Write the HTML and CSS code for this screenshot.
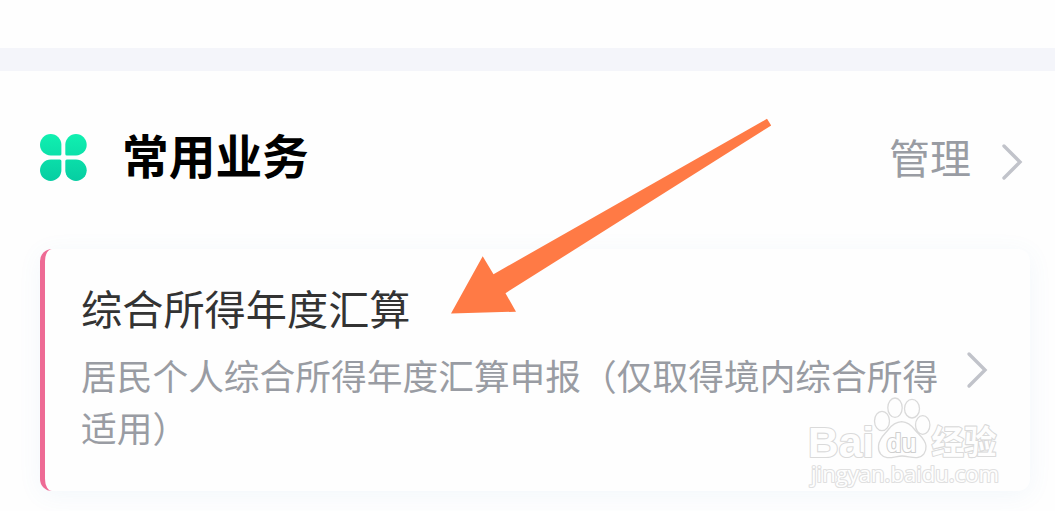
FILE: index.html
```html
<!DOCTYPE html>
<html lang="zh-CN">
<head>
<meta charset="utf-8">
<title>常用业务</title>
<link rel="stylesheet" href="styles.css">
</head>
<body>
<main class="page">
  <div class="divider"></div>
  <header class="section-head">
    <svg class="clover" viewBox="0 0 48 48" aria-hidden="true">
      <defs>
        <linearGradient id="leaf" gradientUnits="userSpaceOnUse" x1="0" y1="0" x2="0" y2="48">
          <stop offset="0" stop-color="#10f0b0"/>
          <stop offset="1" stop-color="#06cda2"/>
        </linearGradient>
      </defs>
      <g fill="url(#leaf)">
        <path d="M11.700 0A10.700 10.700 0 0 0 11.700 21.400H20.900Q22.400 21.400 22.400 19.900V10.700A10.700 10.700 0 0 0 11.700 0Z"/>
        <path d="M37 0A10.700 10.700 0 0 1 37 21.400H27.800Q26.300 21.400 26.300 19.900V10.700A10.700 10.700 0 0 1 37 0Z"/>
        <path d="M11.700 47A10.700 10.700 0 0 1 11.700 25.600H20.900Q22.400 25.600 22.400 27.100V36.300A10.700 10.700 0 0 1 11.700 47Z"/>
        <path d="M37 47A10.700 10.700 0 0 0 37 25.600H27.800Q26.300 25.600 26.300 27.100V36.300A10.700 10.700 0 0 0 37 47Z"/>
      </g>
    </svg>
    <h1 class="section-title">常用业务</h1>
    <a class="manage"><span class="manage-label">管理</span>
      <svg class="chevron" viewBox="0 0 22 38" aria-hidden="true"><path d="M3 3L19 19L3 35"/></svg>
    </a>
  </header>
  <section class="card">
    <div class="card-text">
      <h2 class="card-title">综合所得年度汇算</h2>
      <p class="card-desc">居民个人综合所得年度汇算申报（仅取得境内综合所得<br>适用）</p>
    </div>
    <svg class="chevron" viewBox="0 0 22 38" aria-hidden="true"><path d="M3 3L19 19L3 35"/></svg>
  </section>
  <svg class="arrow" viewBox="0 0 322 196" aria-hidden="true">
    <path d="M317 .8L321.2 7.500L55.500 175.200L66 193.700L1 195.500L32.700 138.200L43.500 156.200Z"/>
  </svg>
  <svg class="watermark" viewBox="0 0 200 100" aria-hidden="true">
    <g class="mark">
      <text class="latin" x="5" y="61.500" textLength="66" lengthAdjust="spacingAndGlyphs">Bai</text>
      <ellipse cx="79" cy="26" rx="7.500" ry="9.700"/>
      <ellipse cx="92" cy="12.700" rx="7.200" ry="9.700"/>
      <ellipse cx="109" cy="13.700" rx="7.500" ry="9.300"/>
      <ellipse cx="119.700" cy="30" rx="7.200" ry="9.300"/>
      <path d="M98.700 26.700C92 27 88 31 85 35C82 39 76 43 75.500 51C75 58 79 62 84 62.600C90 63 94 61 99 61C104 61 109 63 114 62.600C120 62 123.500 57 123 51C122.500 44 116 40 112 35C109 31 105 27 98.700 26.700Z"/>
      <text class="du" x="83.500" y="56.500" textLength="30" lengthAdjust="spacingAndGlyphs">du</text>
      <text class="han" x="128.500" y="59" textLength="65" lengthAdjust="spacingAndGlyphs">经验</text>
      <text class="domain" x="8" y="87" textLength="188" lengthAdjust="spacingAndGlyphs">jingyan.baidu.com</text>
    </g>
  </svg>
</main>
</body>
</html>
```
FILE: styles.css
```css
* { box-sizing: border-box; }

body {
  margin: 0;
  background: #fff;
  font-family: "Noto Sans CJK SC", sans-serif;
}

.page {
  position: relative;
  height: 511px;
  padding-top: 48px;
  overflow: hidden;
  background: #fefefe;
}

.divider {
  height: 23px;
  background: #f4f5fa;
}

.section-head {
  display: flex;
  align-items: center;
  height: 178px;
  padding: 0 32px 4px 39px;
}

.clover {
  width: 48px;
  height: 48px;
}

.section-title {
  margin: 0 0 9px 35px;
  font-size: 46.7px;
  line-height: 60px;
  font-weight: 700;
  color: #000;
}

.manage {
  display: flex;
  align-items: center;
  gap: 30px;
  margin: 7px 0 0 auto;
  font-size: 41px;
  line-height: 60px;
  color: #999ca3;
}

.manage-label {
  padding-bottom: 11px;
}

.manage .chevron {
  margin-top: 1px;
}

.chevron {
  flex: none;
  width: 22px;
  height: 38px;
  fill: none;
  stroke: #c1c3ca;
  stroke-width: 3.4;
  stroke-linecap: round;
}

.card {
  display: flex;
  align-items: center;
  justify-content: space-between;
  width: 990px;
  height: 242px;
  margin-left: 40px;
  padding: 0 42px 0 36px;
  border-left: 5px solid #ee6b95;
  border-radius: 12px;
  background: #fefefe;
  box-shadow: 0 4px 24px rgba(90, 150, 210, 0.07);
}

.card-text {
  padding-bottom: 11px;
}

.card-title {
  margin: 0;
  font-size: 41.2px;
  line-height: 60px;
  font-weight: 400;
  color: #333;
}

.card-desc {
  margin: 12px 0 0;
  font-size: 35.72px;
  line-height: 52px;
  white-space: nowrap;
  color: #999ca3;
}

.arrow {
  position: absolute;
  left: 450px;
  top: 118px;
  width: 322px;
  height: 196px;
  fill: #ff7a45;
}

.watermark {
  position: absolute;
  left: 803px;
  top: 395px;
  width: 200px;
  height: 100px;
}

.mark {
  fill: #fefefe;
  stroke: #dadada;
  stroke-width: 1.3;
}

.mark text {
  paint-order: stroke;
  stroke-width: 2.2;
  stroke-linejoin: round;
}

.latin {
  font: 700 43px "Liberation Sans", sans-serif;
}

.mark .du {
  font: 700 26px "Liberation Sans", sans-serif;
  stroke: #cfcfcf;
}

.han {
  font: 700 33px "Noto Sans CJK SC", sans-serif;
}

.mark .domain {
  font: 400 22px "Open Sans", sans-serif;
  stroke: #e0e0e0;
}
```
